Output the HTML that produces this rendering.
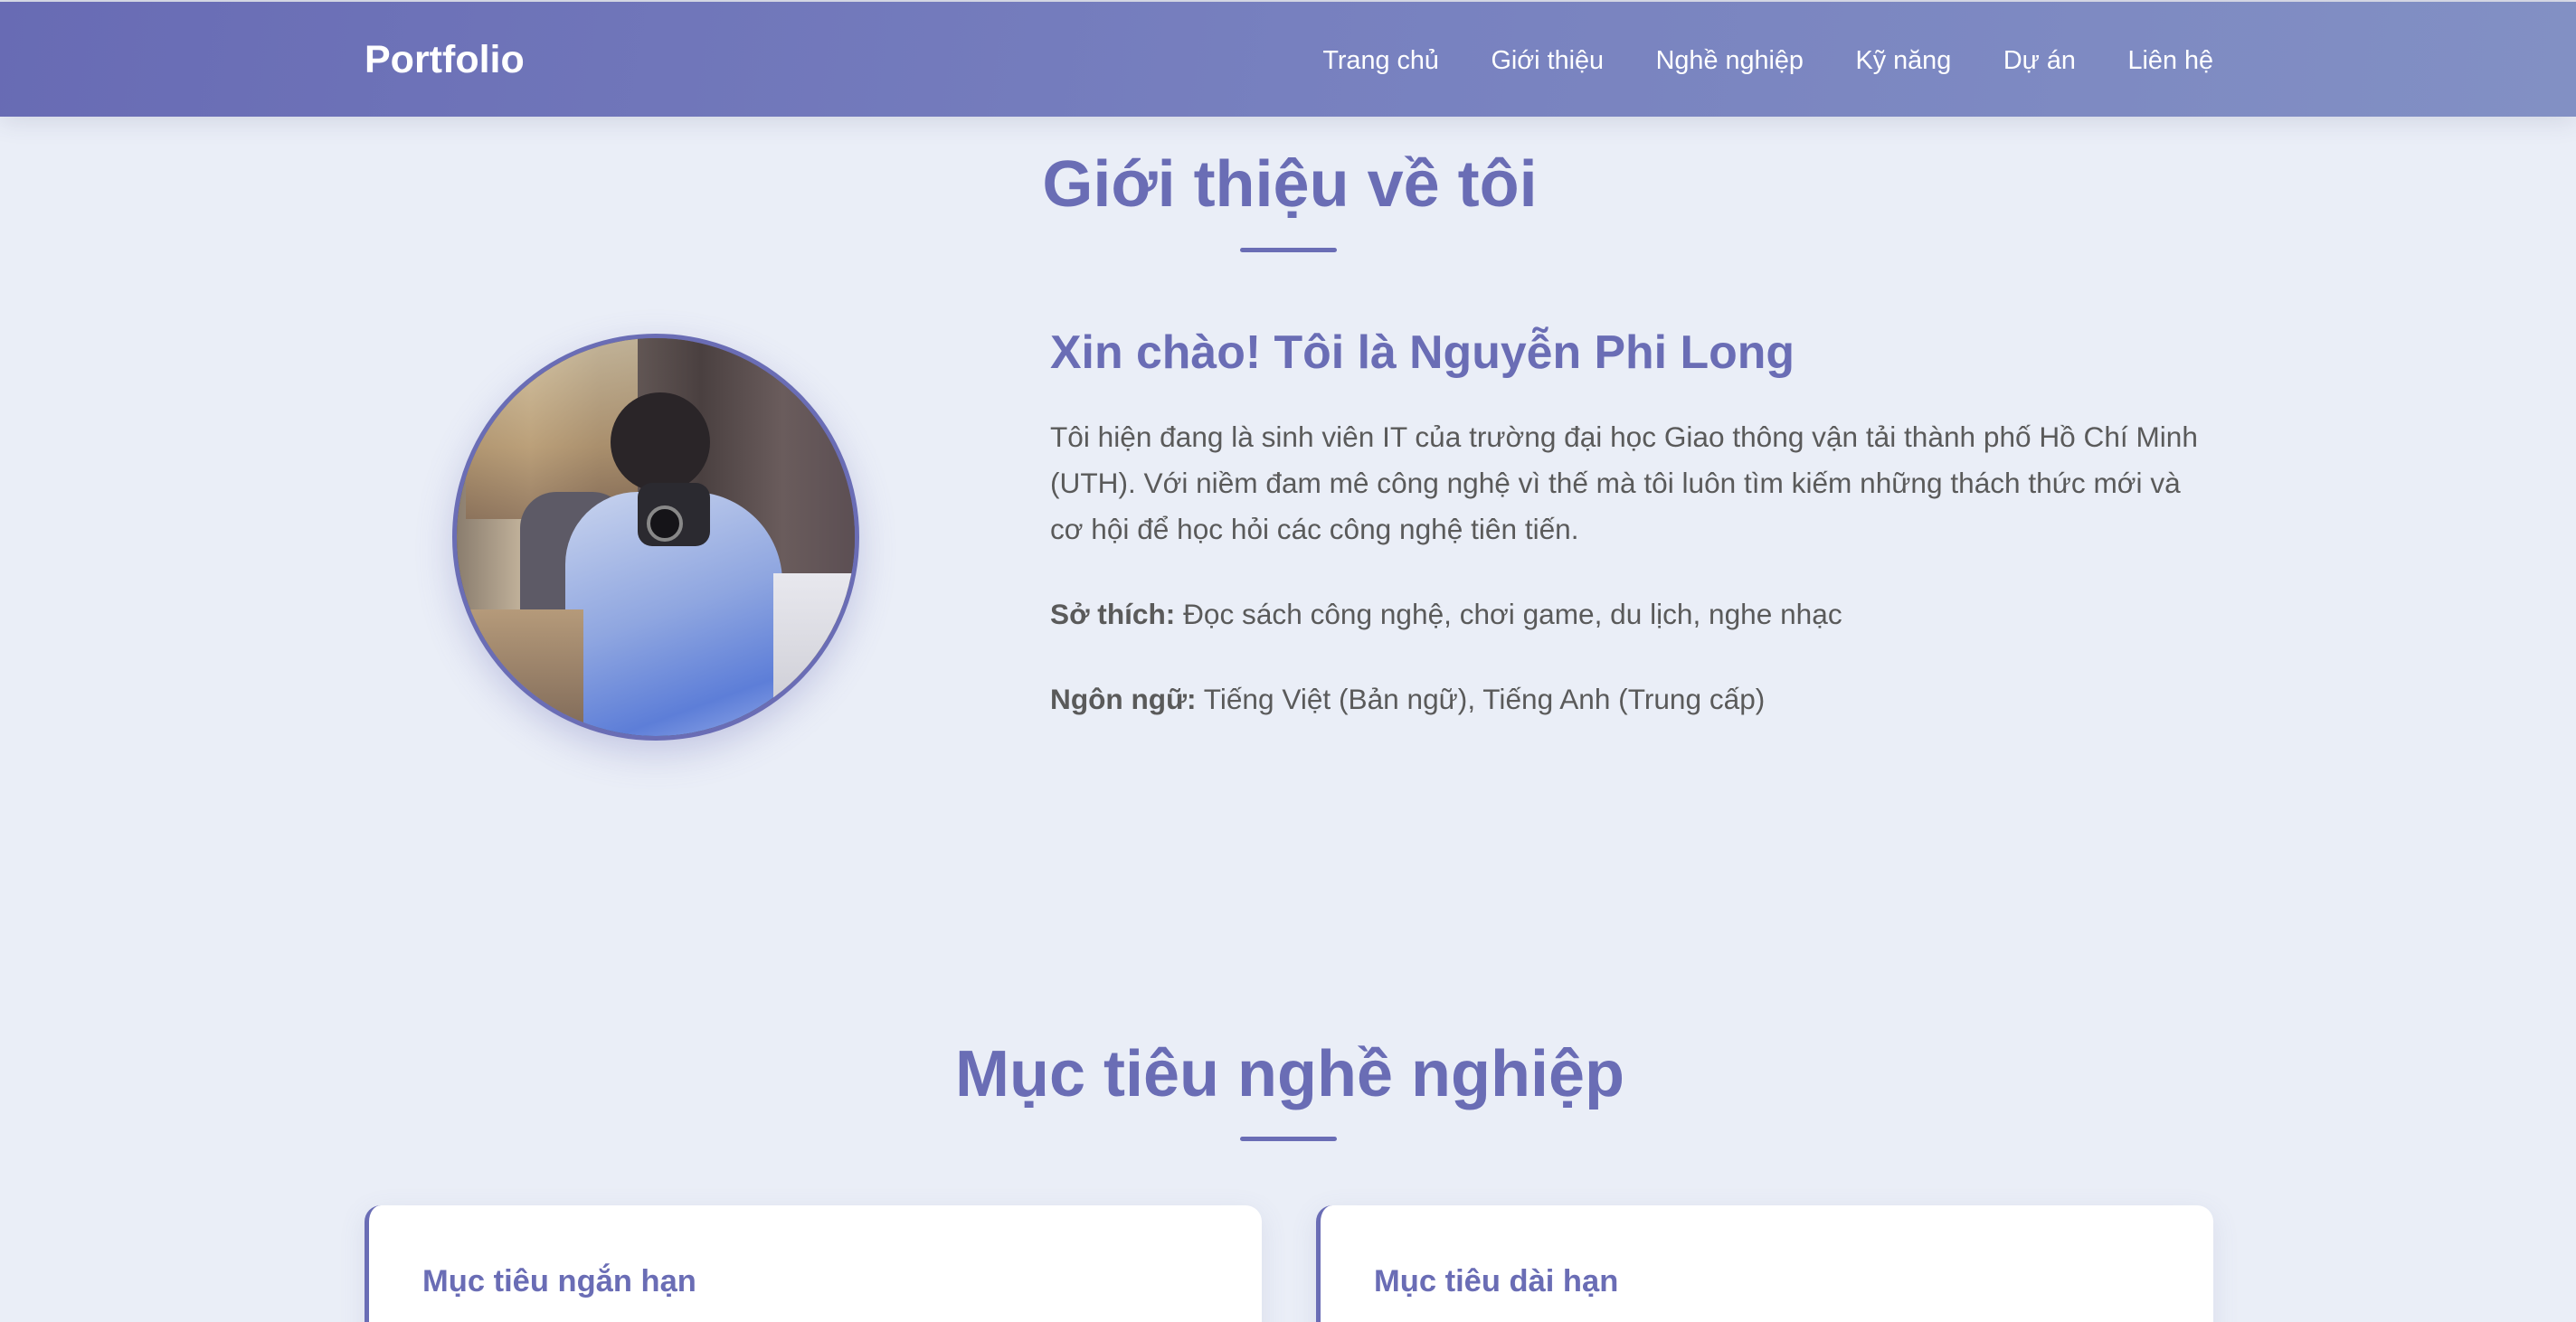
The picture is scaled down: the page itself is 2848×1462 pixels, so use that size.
<!DOCTYPE html>
<html><head><meta charset="utf-8">
<style>
*{margin:0;padding:0;box-sizing:border-box}
html,body{width:2848px;height:1462px;overflow:hidden}
body{background:#eaeef7;font-family:"Liberation Sans","Noto Sans CJK SC",sans-serif;position:relative}
.topline{position:absolute;left:0;top:0;width:2848px;height:2px;background:#dcdfea}
nav{position:absolute;left:0;top:2px;width:2848px;height:127px;background:linear-gradient(100deg,#686bb4 0%,#7780bf 50%,#8290c4 100%);box-shadow:0 4px 26px rgba(60,70,110,.15)}
.logo{position:absolute;left:403px;top:39px;color:#fff;font-weight:bold;font-size:43px;line-height:50px}
.links{position:absolute;right:401px;top:47px;display:flex;gap:57.6px;color:#fff;font-size:28.8px;line-height:36px}
h2{position:absolute;left:2px;width:2848px;text-align:center;color:#6a6db5;font-size:72px;font-weight:bold;line-height:80px}
.bar{position:absolute;left:1371px;width:107px;height:5px;border-radius:3px;background:#6a6db5}
.photo{position:absolute;left:500px;top:369px;width:450px;height:450px;border-radius:50%;border:5px solid #6a6db5;box-shadow:0 14px 40px rgba(106,109,181,.3);overflow:hidden;background:#5a4d4a}
.photo div{position:absolute}
h3{position:absolute;left:1161px;top:358px;color:#6a6db5;font-size:51.8px;font-weight:bold;line-height:62px;white-space:nowrap}
.txt{position:absolute;left:1161px;top:458px;width:1290px;color:#5a5a5a;font-size:31.6px;line-height:51px}
.txt p{margin-bottom:43px}
.card{position:absolute;top:1333px;width:992px;height:160px;background:#fff;border-radius:18px;border-left:5px solid #6a6db5;box-shadow:0 8px 30px rgba(100,110,160,.12)}
.card span{position:absolute;left:59px;top:64px;color:#6a6db5;font-size:34.5px;font-weight:bold;line-height:40px}
</style></head><body>
<div class="topline"></div>
<nav>
<div class="logo">Portfolio</div>
<div class="links"><span>Trang chủ</span><span>Giới thiệu</span><span>Nghề nghiệp</span><span>Kỹ năng</span><span>Dự án</span><span>Liên hệ</span></div>
</nav>
<h2 style="top:164px">Giới thiệu về tôi</h2>
<div class="bar" style="top:274px"></div>

<div class="photo">
  <div style="left:0;top:0;width:450px;height:450px;background:linear-gradient(90deg,#8a7d6e 0%,#c8b8a0 18%,#6f6360 35%,#4a4040 60%,#6a5c5c 80%,#5a4d52 100%)"></div>
  <div style="left:10px;top:0;width:190px;height:200px;background:linear-gradient(180deg,#d6c7a6,#b89a70 60%,#8a6e55);opacity:.8"></div>
  <div style="left:70px;top:170px;width:120px;height:200px;border-radius:40px;background:#5d5a66"></div>
  <div style="left:170px;top:60px;width:110px;height:110px;border-radius:50%;background:#2a2528"></div>
  <div style="left:120px;top:170px;width:240px;height:300px;border-radius:80px 100px 0 0;background:linear-gradient(160deg,#c9d4ee 0%,#8fa6e0 45%,#5d7ed8 75%,#a9bbef 100%)"></div>
  <div style="left:200px;top:160px;width:80px;height:70px;border-radius:16px;background:#2b2a30"></div>
  <div style="left:210px;top:185px;width:40px;height:40px;border-radius:50%;background:#151418;border:4px solid #888"></div>
  <div style="left:350px;top:260px;width:100px;height:190px;background:linear-gradient(180deg,#e8e8ee,#c8c8d0)"></div>
  <div style="left:0;top:300px;width:140px;height:150px;background:linear-gradient(180deg,#b59a7a,#7a6555)"></div>
</div>

<h3>Xin chào! Tôi là Nguyễn Phi Long</h3>
<div class="txt">
<p>Tôi hiện đang là sinh viên IT của trường đại học Giao thông vận tải thành phố Hồ Chí Minh (UTH). Với niềm đam mê công nghệ vì thế mà tôi luôn tìm kiếm những thách thức mới và cơ hội để học hỏi các công nghệ tiên tiến.</p>
<p><b>Sở thích:</b> Đọc sách công nghệ, chơi game, du lịch, nghe nhạc</p>
<p><b>Ngôn ngữ:</b> Tiếng Việt (Bản ngữ), Tiếng Anh (Trung cấp)</p>
</div>

<h2 style="top:1148px">Mục tiêu nghề nghiệp</h2>
<div class="bar" style="top:1257px"></div>

<div class="card" style="left:403px"><span>Mục tiêu ngắn hạn</span></div>
<div class="card" style="left:1455px"><span>Mục tiêu dài hạn</span></div>
</body></html>
